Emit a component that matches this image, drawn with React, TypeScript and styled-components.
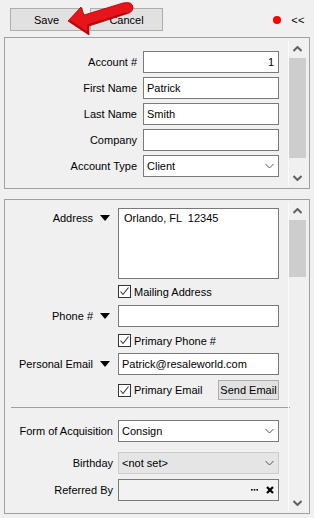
import React, { FC } from 'react';
import styled, { createGlobalStyle } from 'styled-components';

const Global = createGlobalStyle`
    html, body {
        margin: 0;
        padding: 0;
        background: #f0f0f0;
    }
    body {
        font-family: "Liberation Sans", Arial, sans-serif;
        font-size: 11px;
        color: #000;
    }
`;

const Screen = styled.div`
    position: relative;
    width: 314px;
    height: 518px;
    display: flex;
    flex-direction: column;
    background: #f0f0f0;
    overflow: hidden;
`;

const Toolbar = styled.div`
    height: 37px;
    box-sizing: border-box;
    padding: 8px 9px 0 10px;
    display: flex;
    align-items: flex-start;
`;

const Button = styled.div<{ $w: number; $h: number }>`
    width: ${p => p.$w}px;
    height: ${p => p.$h}px;
    box-sizing: border-box;
    border: 1px solid #adadad;
    background: #e1e1e1;
    display: flex;
    align-items: center;
    justify-content: center;
    flex-shrink: 0;
`;

const ToolButton = styled(Button)`
    margin-right: 7px;
`;

const SideButton = styled(Button)`
    margin-left: auto;
    margin-right: 9px;
`;

const Status = styled.div`
    margin-left: auto;
    height: 23px;
    display: flex;
    align-items: center;
`;

const Dot = styled.span`
    width: 8px;
    height: 8px;
    border-radius: 50%;
    background: #ff0000;
    margin-right: 10px;
`;

const Collapse = styled.span`
    letter-spacing: 0.5px;
    color: #000;
`;

const Panel = styled.div<{ $h: number; $mt: number }>`
    margin: ${p => p.$mt}px 4px 0 4px;
    height: ${p => p.$h}px;
    box-sizing: border-box;
    border: 1px solid #a0a0a0;
    display: flex;
`;

const Body = styled.div<{ $pt: number }>`
    flex: 1;
    padding-top: ${p => p.$pt}px;
    display: flex;
    flex-direction: column;
`;

const Scroll = styled.div`
    width: 17px;
    margin: 2px 3px 2px 0;
    border-left: 1px solid #fbfbfb;
    display: flex;
    flex-direction: column;
`;

const ScrollBtn = styled.div<{ $end?: boolean }>`
    height: 17px;
    display: flex;
    align-items: center;
    justify-content: center;
    margin-top: ${p => (p.$end ? 'auto' : '0')};
`;

const Thumb = styled.div<{ $h: number }>`
    height: ${p => p.$h}px;
    margin-top: 1px;
    background: #cdcdcd;
`;

const TopGrid = styled.div`
    display: grid;
    grid-template-columns: 132px 136px;
    grid-auto-rows: 22px;
    column-gap: 6px;
    row-gap: 4px;
`;

const Label = styled.div`
    display: flex;
    align-items: center;
    justify-content: flex-end;
    white-space: nowrap;
`;

const Field = styled.div<{ $right?: boolean; $bg?: string; $border?: string }>`
    height: 22px;
    box-sizing: border-box;
    border: 1px solid ${p => p.$border ?? '#7a7a7a'};
    background: ${p => p.$bg ?? '#fff'};
    display: flex;
    align-items: center;
    justify-content: ${p => (p.$right ? 'flex-end' : 'space-between')};
    padding: 0 4px 0 3px;
    white-space: nowrap;
`;

const Memo = styled.div`
    height: 71px;
    width: 161px;
    box-sizing: border-box;
    border: 1px solid #7a7a7a;
    background: #fff;
    padding: 3px 5px;
    white-space: pre;
`;

const Row = styled.div<{ $mt: number; $h?: number; $top?: boolean }>`
    display: flex;
    align-items: ${p => (p.$top ? 'flex-start' : 'center')};
    margin-top: ${p => p.$mt}px;
    height: ${p => (p.$h ? `${p.$h}px` : 'auto')};
`;

const RowLabel = styled.div<{ $top?: boolean }>`
    width: 108px;
    flex-shrink: 0;
    margin-right: 5px;
    display: flex;
    align-items: center;
    justify-content: flex-end;
    white-space: nowrap;
    padding-top: ${p => (p.$top ? '4px' : '0')};
`;

const Drop = styled.svg`
    margin-left: 7px;
    margin-right: 3px;
`;

const Control = styled.div`
    width: 161px;
    flex-shrink: 0;
`;

const Check = styled.label`
    display: flex;
    align-items: center;
    white-space: nowrap;
`;

const Box = styled.span`
    width: 13px;
    height: 13px;
    box-sizing: border-box;
    border: 1px solid #333;
    background: #fff;
    margin-right: 3px;
    display: flex;
    align-items: center;
    justify-content: center;
`;

const Rule = styled.div`
    height: 1px;
    background: #a0a0a0;
    margin: 7px -2px 0 6px;
`;

const Tools = styled.span`
    display: flex;
    align-items: center;
    gap: 8px;
`;

const Pointer = styled.svg`
    position: absolute;
    left: 0;
    top: 0;
    pointer-events: none;
`;

const Chevron: FC<{ up?: boolean; color?: string; w?: number }> = ({ up, color = '#555', w = 1 }) => (
    <svg width="9" height="6" viewBox="0 0 9 6">
        <polyline
            points={up ? '0.5,5 4.5,1 8.5,5' : '0.5,1 4.5,5 8.5,1'}
            fill="none"
            stroke={color}
            strokeWidth={w}
        />
    </svg>
);

const Tick: FC = () => (
    <svg width="11" height="11" viewBox="0 0 11 11">
        <polyline points="1.5,5.5 4,8.5 9.5,1.5" fill="none" stroke="#333" strokeWidth="1.1" />
    </svg>
);

const DownArrow: FC = () => (
    <Drop width="10" height="6" viewBox="0 0 10 6">
        <polygon points="0,0 10,0 5,6" fill="#000" />
    </Drop>
);

const ScrollBar: FC<{ thumb: number }> = ({ thumb }) => (
    <Scroll>
        <ScrollBtn>
            <Chevron up color="#606060" w={2} />
        </ScrollBtn>
        <Thumb $h={thumb} />
        <ScrollBtn $end>
            <Chevron color="#606060" w={2} />
        </ScrollBtn>
    </Scroll>
);

const Combo: FC<{ value: string; disabled?: boolean }> = ({ value, disabled }) => (
    <Field $bg={disabled ? '#e5e5e5' : '#fff'} $border={disabled ? '#cccccc' : '#7a7a7a'}>
        <span>{value}</span>
        <Chevron />
    </Field>
);

const CheckItem: FC<{ text: string }> = ({ text }) => (
    <Check>
        <Box>
            <Tick />
        </Box>
        {text}
    </Check>
);

export default function App() {
    return (
        <Screen>
            <Global />
            <Toolbar>
                <ToolButton $w={73} $h={23}>Save</ToolButton>
                <ToolButton $w={73} $h={23}>Cancel</ToolButton>
                <Status>
                    <Dot />
                    <Collapse>&lt;&lt;</Collapse>
                </Status>
            </Toolbar>

            <Panel $h={152} $mt={0}>
                <Body $pt={13}>
                    <TopGrid>
                        <Label>Account #</Label>
                        <Field $right>1</Field>
                        <Label>First Name</Label>
                        <Field>Patrick</Field>
                        <Label>Last Name</Label>
                        <Field>Smith</Field>
                        <Label>Company</Label>
                        <Field />
                        <Label>Account Type</Label>
                        <Combo value="Client" />
                    </TopGrid>
                </Body>
                <ScrollBar thumb={100} />
            </Panel>

            <Panel $h={315} $mt={10}>
                <Body $pt={8}>
                    <Row $mt={0} $top>
                        <RowLabel $top>
                            Address
                            <DownArrow />
                        </RowLabel>
                        <Memo>{'Orlando, FL  12345'}</Memo>
                    </Row>
                    <Row $mt={6} $h={13}>
                        <RowLabel />
                        <CheckItem text="Mailing Address" />
                    </Row>
                    <Row $mt={7} $h={22}>
                        <RowLabel>
                            Phone #
                            <DownArrow />
                        </RowLabel>
                        <Control>
                            <Field />
                        </Control>
                    </Row>
                    <Row $mt={7} $h={13}>
                        <RowLabel />
                        <CheckItem text="Primary Phone #" />
                    </Row>
                    <Row $mt={6} $h={22}>
                        <RowLabel>
                            Personal Email
                            <DownArrow />
                        </RowLabel>
                        <Control>
                            <Field>Patrick@resaleworld.com</Field>
                        </Control>
                    </Row>
                    <Row $mt={5} $h={20}>
                        <RowLabel />
                        <CheckItem text="Primary Email" />
                        <SideButton $w={61} $h={20}>Send Email</SideButton>
                    </Row>
                    <Rule />
                    <Row $mt={12} $h={22}>
                        <RowLabel>Form of Acquisition</RowLabel>
                        <Control>
                            <Combo value="Consign" />
                        </Control>
                    </Row>
                    <Row $mt={10} $h={22}>
                        <RowLabel>Birthday</RowLabel>
                        <Control>
                            <Combo value="<not set>" disabled />
                        </Control>
                    </Row>
                    <Row $mt={5} $h={22}>
                        <RowLabel>Referred By</RowLabel>
                        <Control>
                            <Field $bg="#f2f2f2" $right>
                                <Tools>
                                    <svg width="7" height="2" viewBox="0 0 7 2">
                                        <rect x="0" y="0" width="1.6" height="1.6" fill="#000" />
                                        <rect x="2.7" y="0" width="1.6" height="1.6" fill="#000" />
                                        <rect x="5.4" y="0" width="1.6" height="1.6" fill="#000" />
                                    </svg>
                                    <svg width="8" height="8" viewBox="0 0 8 8">
                                        <path d="M1 1 L7 7 M7 1 L1 7" stroke="#000" strokeWidth="2.2" />
                                    </svg>
                                </Tools>
                            </Field>
                        </Control>
                    </Row>
                </Body>
                <ScrollBar thumb={57} />
            </Panel>

            <Pointer width="140" height="40" viewBox="0 0 140 40">
                <path
                    d="M68 21 L81 7 L84 15 L123 3 Q133 1 133 8 Q132 13 126 14 L89 26 L89 35 Z"
                    fill="#e8141c"
                    stroke="#a40000"
                    strokeWidth="0.8"
                    strokeLinejoin="round"
                />
                <path d="M70 21 L88 33 L88 25 L126 13" fill="none" stroke="#b00000" strokeWidth="1.2" />
            </Pointer>
        </Screen>
    );
}
